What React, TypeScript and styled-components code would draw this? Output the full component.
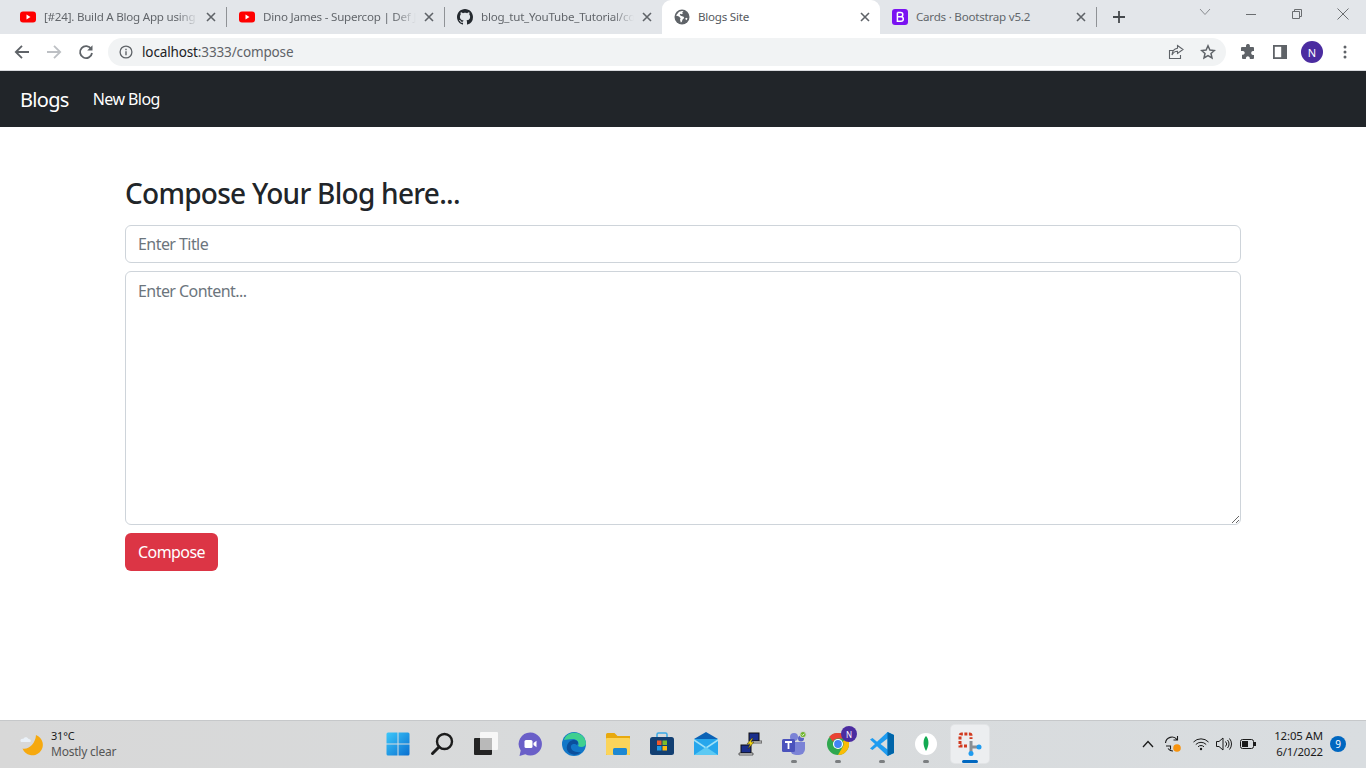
import React from "react";
import styled, { createGlobalStyle } from "styled-components";

const uiFont = `"Noto Sans", "Open Sans", "Liberation Sans", sans-serif`;

const GlobalStyle = createGlobalStyle`
  html, body { margin: 0; padding: 0; background: #fff; }
  body { font-family: ${uiFont}; overflow: hidden; }
  * { box-sizing: border-box; }
`;

const Screen = styled.div`
  display: flex;
  flex-direction: column;
  width: 1366px;
  height: 768px;
  overflow: hidden;
`;

/* browser chrome */
const TabStrip = styled.div`
  display: flex;
  align-items: stretch;
  height: 34px;
  background: #e3e6ea;
  padding-left: 8px;
  flex: none;
`;

const Tab = styled.div<{ $active?: boolean; $width: number }>`
  display: flex;
  align-items: center;
  width: ${(p) => p.$width}px;
  padding: 0 10px 0 12px;
  gap: 8px;
  background: ${(p) => (p.$active ? "#fff" : "transparent")};
  border-radius: 9px 9px 0 0;
  color: ${(p) => (p.$active ? "#55595e" : "#62666b")};
  flex: none;
`;

const TabTitle = styled.span<{ $fade?: boolean }>`
  flex: 1;
  min-width: 0;
  padding-bottom: 2px;
  font-size: 11.6px;
  letter-spacing: -0.02em;
  white-space: nowrap;
  overflow: hidden;
  ${(p) =>
    p.$fade &&
    `-webkit-mask-image: linear-gradient(90deg, #000 86%, transparent 100%);
     mask-image: linear-gradient(90deg, #000 86%, transparent 100%);`}
`;

const Divider = styled.div`
  width: 1px;
  height: 20px;
  align-self: center;
  background: #8f9296;
  flex: none;
`;

const PlusSlot = styled.div`
  display: flex;
  align-items: center;
  margin-left: 16px;
  flex: none;
`;

const WindowControls = styled.div`
  display: flex;
  align-items: flex-start;
  margin-left: auto;
  padding: 8px 17px 0 0;
  gap: 34px;
  flex: none;
`;

const Toolbar = styled.div`
  display: flex;
  align-items: center;
  height: 37px;
  padding-left: 14px;
  background: #fff;
  border-bottom: 1px solid #d8dadd;
  flex: none;
`;

const NavIcons = styled.div`
  display: flex;
  align-items: center;
  gap: 16px;
  margin-right: 14px;
`;

const AddressBar = styled.div`
  display: flex;
  align-items: center;
  width: 1118px;
  height: 28px;
  padding: 0 10px 0 11px;
  border-radius: 14px;
  background: #f1f3f4;
  gap: 9px;
  flex: none;
`;

const Url = styled.span`
  flex: 1;
  padding-bottom: 1px;
  font-size: 13.5px;
  letter-spacing: -0.01em;
  color: #5f6368;
  b { font-weight: 400; color: #202124; }
`;

const AddressActions = styled.div`
  display: flex;
  align-items: center;
  gap: 16px;
`;

const ToolActions = styled.div`
  display: grid;
  grid-template-columns: 32px 32px 32px 34px;
  justify-items: center;
  align-items: center;
  margin-left: 6px;
`;

const Avatar = styled.div`
  display: flex;
  align-items: center;
  justify-content: center;
  width: 22px;
  height: 22px;
  border-radius: 50%;
  background: #4b2ca0;
  color: #fff;
  font-size: 11px;
`;

/* page */
const NavBar = styled.nav`
  display: flex;
  align-items: center;
  height: 56px;
  padding: 0 20px;
  background: #212529;
  color: #fff;
  flex: none;
`;

const Brand = styled.a`
  font-size: 20px;
  letter-spacing: -0.035em;
  margin-right: 24px;
`;

const NavLink = styled.a`
  font-size: 16px;
  letter-spacing: -0.035em;
`;

const Main = styled.main`
  flex: 1;
  width: 1140px;
  margin: 0 auto;
  padding: 47px 12px 0;
`;

const Heading = styled.h3`
  margin: 0 0 13px;
  font-size: 28px;
  font-weight: 500;
  line-height: 38px;
  letter-spacing: -0.026em;
  color: #212529;
`;

const TitleInput = styled.input`
  display: block;
  width: 100%;
  height: 38px;
  padding: 6px 12px;
  margin-bottom: 8px;
  border: 1px solid #ced4da;
  border-radius: 6px;
  background: #fff;
  font-family: inherit;
  font-size: 16px;
  line-height: 24px;
  letter-spacing: -0.035em;
  &::placeholder { color: #6c757d; opacity: 1; }
`;

const ContentArea = styled.textarea`
  display: block;
  width: 100%;
  height: 254px;
  padding: 7px 12px 6px;
  margin-bottom: 8px;
  border: 1px solid #ced4da;
  border-radius: 6px;
  background: #fff;
  font-family: inherit;
  font-size: 16px;
  line-height: 24px;
  letter-spacing: -0.035em;
  &::placeholder { color: #6c757d; opacity: 1; }
`;

const ComposeButton = styled.button`
  display: block;
  height: 38px;
  width: 93px;
  padding: 0;
  border: 0;
  border-radius: 6px;
  background: #dc3545;
  color: #fff;
  font-family: inherit;
  font-size: 16px;
  letter-spacing: -0.035em;
`;

/* windows taskbar */
const TaskBar = styled.div`
  display: flex;
  align-items: center;
  height: 48px;
  padding-bottom: 1px;
  background: linear-gradient(90deg, #d8d8d8 0%, #d8dadb 40%, #d9dde0 100%);
  border-top: 1px solid #c6c8ca;
  flex: none;
`;

const Weather = styled.div`
  display: flex;
  align-items: center;
  gap: 6px;
  width: 383px;
  padding-left: 20px;
  flex: none;
`;

const WeatherText = styled.div`
  font-size: 11px;
  line-height: 16px;
  letter-spacing: -0.02em;
  color: #1b1b1b;
  span { display: block; color: #555; font-size: 12px; }
`;

const AppRow = styled.div`
  display: flex;
  align-items: center;
  gap: 14px;
  flex: none;
`;

const AppSlot = styled.div<{ $active?: boolean }>`
  position: relative;
  display: flex;
  align-items: center;
  justify-content: center;
  width: 30px;
  height: 38px;
  border-radius: 4px;
  ${(p) =>
    p.$active &&
    `background: #eceef0;
     box-shadow: 0 0 0 1px #e2e4e6;
     width: 38px;
     margin: 0 -4px;`}
`;

const RunDot = styled.i<{ $active?: boolean }>`
  position: absolute;
  bottom: 0;
  left: 50%;
  width: ${(p) => (p.$active ? 16 : 6)}px;
  height: 3px;
  margin-left: ${(p) => (p.$active ? -8 : -3)}px;
  border-radius: 2px;
  background: ${(p) => (p.$active ? "#0067c0" : "#7b7e80")};
`;

const Tray = styled.div`
  display: flex;
  align-items: center;
  margin-left: auto;
  padding-right: 20px;
  gap: 10px;
  flex: none;
`;

const TrayIcons = styled.div`
  display: grid;
  grid-template-columns: 24px 26px 30px 16px 32px;
  justify-items: center;
  align-items: center;
`;

const Clock = styled.div`
  width: 49px;
  text-align: right;
  font-size: 11.4px;
  line-height: 16px;
  letter-spacing: -0.01em;
  white-space: nowrap;
  color: #1b1b1b;
`;

const Badge = styled.div`
  display: flex;
  align-items: center;
  justify-content: center;
  width: 16px;
  height: 16px;
  margin-left: -3px;
  border-radius: 50%;
  background: #0067c0;
  color: #fff;
  font-size: 10px;
`;

const Stack = styled.span`
  position: relative;
  display: flex;
`;

const ProfileBadge = styled.span`
  position: absolute;
  top: -7px;
  right: -8px;
  display: flex;
  align-items: center;
  justify-content: center;
  width: 16px;
  height: 16px;
  border-radius: 50%;
  background: #4b2ca0;
  color: #fff;
  font-size: 8px;
`;

/* icons */
const Close = () => (
  <svg width="10" height="10" viewBox="0 0 10 10" style={{ flex: "none" }}>
    <path d="M1 1l8 8M9 1l-8 8" stroke="#5f6368" strokeWidth="1.6" />
  </svg>
);

const YouTube = () => (
  <svg width="16" height="16" viewBox="0 0 16 16" style={{ flex: "none" }}>
    <rect y="2.5" width="16" height="11" rx="3" fill="#f00" />
    <path d="M6.5 5.6v4.8L10.5 8z" fill="#fff" />
  </svg>
);

const GitHub = () => (
  <svg width="16" height="16" viewBox="0 0 16 16" style={{ flex: "none" }}>
    <path
      fill="#24292f"
      d="M8 0C3.58 0 0 3.58 0 8c0 3.54 2.29 6.53 5.47 7.59.4.07.55-.17.55-.38 0-.19-.01-.82-.01-1.49-2.01.37-2.53-.49-2.69-.94-.09-.23-.48-.94-.82-1.13-.28-.15-.68-.52-.01-.53.63-.01 1.08.58 1.23.82.72 1.21 1.87.87 2.33.66.07-.52.28-.87.51-1.07-1.78-.2-3.64-.89-3.64-3.95 0-.87.31-1.59.82-2.15-.08-.2-.36-1.02.08-2.12 0 0 .67-.21 2.2.82.64-.18 1.32-.27 2-.27s1.36.09 2 .27c1.53-1.04 2.2-.82 2.2-.82.44 1.1.16 1.92.08 2.12.51.56.82 1.27.82 2.15 0 3.07-1.87 3.75-3.65 3.95.29.25.54.73.54 1.48 0 1.07-.01 1.93-.01 2.2 0 .21.15.46.55.38A8.01 8.01 0 0 0 16 8c0-4.42-3.58-8-8-8z"
    />
  </svg>
);

const Globe = () => (
  <svg width="16" height="16" viewBox="0 0 16 16" style={{ flex: "none" }}>
    <circle cx="8" cy="8" r="7.5" fill="#5f6368" />
    <path
      fill="#fff"
      d="M2 6.5l3 1 1.6 1.8-.6 1.5.8 2.6.9-.4.9-2.6 1.6-1.5-.6-1.2-3-1-.9-1.4 1.2-.5.6.5 1.2-.4-.4-1.6 1.3-.9-1.5-.5-3 .8zM11 9.8l1.5 1.5 1-2-1-.6z"
    />
  </svg>
);

const BootstrapIcon = () => (
  <svg width="16" height="16" viewBox="0 0 16 16" style={{ flex: "none" }}>
    <rect width="16" height="16" rx="3" fill="#7b12f2" />
    <path
      fill="none"
      stroke="#fff"
      strokeWidth="1.5"
      d="M5.4 3.5h3.3c1.4 0 2.1.8 2.1 2s-.8 2.3-2.2 2.3H5.4m0 0h3.6c1.5 0 2.3.9 2.3 2.2s-.9 2.3-2.4 2.3H5.4z M5.4 3.5v4.3"
    />
  </svg>
);

const Plus = () => (
  <svg width="12" height="12" viewBox="0 0 12 12">
    <path d="M6 0v12M0 6h12" stroke="#45494d" strokeWidth="1.8" />
  </svg>
);

const WinChevron = () => (
  <svg width="12" height="8" viewBox="0 0 12 8">
    <path d="M1 1l5 5.5L11 1" fill="none" stroke="#8a8d91" />
  </svg>
);

const WinMin = () => (
  <svg width="12" height="12" viewBox="0 0 12 12">
    <path d="M1 6.5h10" stroke="#6a6d70" />
  </svg>
);

const WinRestore = () => (
  <svg width="12" height="12" viewBox="0 0 12 12">
    <path d="M1.5 3.5h7v7h-7zM3.5 3.5v-2h7v7h-2" fill="none" stroke="#6a6d70" />
  </svg>
);

const WinClose = () => (
  <svg width="12" height="12" viewBox="0 0 12 12">
    <path d="M.5.5l11 11M11.5.5l-11 11" stroke="#6a6d70" />
  </svg>
);

const Back = () => (
  <svg width="16" height="16" viewBox="0 0 16 16">
    <path d="M15 8H2M8 1.8L1.8 8 8 14.2" fill="none" stroke="#5f6368" strokeWidth="1.8" />
  </svg>
);

const Forward = () => (
  <svg width="16" height="16" viewBox="0 0 16 16">
    <path d="M1 8h13M8 1.8L14.2 8 8 14.2" fill="none" stroke="#bdc0c4" strokeWidth="1.8" />
  </svg>
);

const Reload = () => (
  <svg width="16" height="16" viewBox="0 0 16 16">
    <path d="M13.2 5A6 6 0 1 0 14 9" fill="none" stroke="#5f6368" strokeWidth="1.8" />
    <path d="M14.5 1.2v5.3H9.2z" fill="#5f6368" />
  </svg>
);

const Info = () => (
  <svg width="14" height="14" viewBox="0 0 14 14" style={{ flex: "none" }}>
    <circle cx="7" cy="7" r="5.9" fill="none" stroke="#5f6368" strokeWidth="1.3" />
    <path d="M7 6.2v4M7 3.8v1.4" stroke="#5f6368" strokeWidth="1.4" />
  </svg>
);

const Share = () => (
  <svg width="16" height="16" viewBox="0 0 16 16">
    <path d="M5 6.5H1.5v8h11V11" fill="none" stroke="#5f6368" strokeWidth="1.1" />
    <path
      d="M9.5 1.5l5.5 4-5.500 4V7.300C7 7.300 5.200 8.500 4 11c.2-3.700 2.400-6.200 5.500-6.700z"
      fill="none"
      stroke="#5f6368"
      strokeWidth="1.1"
    />
  </svg>
);

const Star = () => (
  <svg width="16" height="16" viewBox="0 0 16 16">
    <path
      d="M8 1.8l1.9 4.2 4.5.5-3.400 3 1 4.500L8 11.700 4 14l1-4.500-3.400-3 4.500-.5z"
      fill="none"
      stroke="#5f6368"
      strokeWidth="1.5"
    />
  </svg>
);

const Puzzle = () => (
  <svg width="16" height="16" viewBox="0 0 16 16">
    <path
      fill="#5f6368"
      d="M6 1.500a2 2 0 0 1 3.900 0V3H13a1 1 0 0 1 1 1v3h-1.300a2 2 0 0 0 0 3.900H14V14a1 1 0 0 1-1 1H9.800v-1.300a2 2 0 0 0-3.900 0V15H3a1 1 0 0 1-1-1v-3.200h1.200a2 2 0 0 0 0-3.900H1V4a1 1 0 0 1 1-1h4z"
    />
  </svg>
);

const SidePanel = () => (
  <svg width="14" height="14" viewBox="0 0 14 14">
    <rect width="14" height="14" fill="#5f6368" />
    <rect x="1.8" y="1.800" width="6.400" height="10.400" fill="#fff" />
  </svg>
);

const Kebab = () => (
  <svg width="12" height="14" viewBox="0 0 12 14">
    <circle cx="6" cy="2" r="1.5" fill="#5f6368" />
    <circle cx="6" cy="7" r="1.5" fill="#5f6368" />
    <circle cx="6" cy="12" r="1.5" fill="#5f6368" />
  </svg>
);

const MoonCloud = () => (
  <svg width="25" height="25" viewBox="0 0 25 25" style={{ flex: "none" }}>
    <path d="M16 3a10.500 10.500 0 1 1-13.500 13.500C8 18 15.500 12 16 3z" fill="#f6a90f" />
    <path d="M1 10c-1.500-2 .4-3.800 2.200-3 .9-2.400 4.300-2.400 5.300 0 1.800-.2 3 1.600 1.800 3z" fill="#eaf1f8" />
  </svg>
);

const WindowsLogo = () => (
  <svg width="24" height="24" viewBox="0 0 24 24">
    <defs>
      <linearGradient id="win" x1="0" y1="0" x2="1" y2="1">
        <stop offset="0" stopColor="#3cc8fa" />
        <stop offset="1" stopColor="#0a6fd0" />
      </linearGradient>
    </defs>
    <rect x=".5" y=".5" width="23" height="23" rx="1.5" fill="url(#win)" />
    <path d="M12 0v24M0 12h24" stroke="#d9dcdd" strokeWidth="1" />
  </svg>
);

const SearchIcon = () => (
  <svg width="24" height="24" viewBox="0 0 24 24">
    <circle cx="14.5" cy="9.500" r="7.500" fill="none" stroke="#1c1c1c" strokeWidth="2.400" />
    <path d="M9 15l-6.500 6.500" stroke="#1c1c1c" strokeWidth="3" strokeLinecap="round" />
  </svg>
);

const TaskView = () => (
  <svg width="24" height="24" viewBox="0 0 24 24">
    <rect x="6" y="0" width="18" height="18" rx="1" fill="#f7f7f7" />
    <rect x="0" y="6" width="18" height="17" rx="1" fill="#242424" />
    <rect x="6" y="6" width="12" height="12" fill="#b9b9b9" />
  </svg>
);

const ChatIcon = () => (
  <svg width="24" height="24" viewBox="0 0 24 24">
    <path d="M12.500.5a11.500 11.500 0 1 1-5.200 21.800L1.500 24l1.200-5.500A11.500 11.500 0 0 1 12.500.5z" fill="#6a5fc8" />
    <rect x="6.500" y="8" width="8" height="8" rx="1.500" fill="#fff" />
    <path d="M15.500 11l3-2.200v6.400l-3-2.200z" fill="#fff" />
  </svg>
);

const EdgeIcon = () => (
  <svg width="24" height="24" viewBox="0 0 24 24">
    <circle cx="12" cy="12" r="12" fill="#1277c8" />
    <path d="M2 8C5-2 22-2 24 11c0 4-5 5-8 3 2-3-1-7-5-7-4 0-7 1-9 1z" fill="#3fd08f" />
    <path d="M12 8c4 0 5 3 3 5-1-1-5-2-6 1-1 4 4 7 10 6-6 6-16 1-14-6 1-4 4-6 7-6z" fill="#0b4f9c" />
  </svg>
);

const FolderIcon = () => (
  <svg width="24" height="24" viewBox="0 0 24 24">
    <path d="M0 2.500A1.500 1.500 0 0 1 1.500 1h7l3 3H24v19H0z" fill="#e8a90e" />
    <rect x="0" y="6" width="24" height="17" rx="1" fill="#fbd45a" />
    <rect x="7" y="16" width="14" height="7" rx="1.500" fill="#1e88d2" />
  </svg>
);

const StoreIcon = () => (
  <svg width="24" height="24" viewBox="0 0 24 24">
    <path d="M7 5V2.500A1.500 1.500 0 0 1 8.500 1h7A1.500 1.500 0 0 1 17 2.500V5" fill="none" stroke="#3aa9e6" strokeWidth="1.5" />
    <rect y="5" width="24" height="18" rx="2.500" fill="#123f72" />
    <rect x="7" y="8.500" width="4.500" height="4.500" fill="#f05a2a" />
    <rect x="12.500" y="8.500" width="4.500" height="4.500" fill="#7cbb2a" />
    <rect x="7" y="14" width="4.500" height="4.500" fill="#1d9ae8" />
    <rect x="12.500" y="14" width="4.500" height="4.500" fill="#fdbb10" />
  </svg>
);

const MailIcon = () => (
  <svg width="24" height="24" viewBox="0 0 24 24">
    <path d="M12 0l12 7H0z" fill="#0b62b5" />
    <rect y="7" width="24" height="16" fill="#26a6ec" />
    <path d="M0 7l12 8 12-8v2l-12 8L0 9z" fill="#9fe0f7" />
    <path d="M0 23l12-8 12 8z" fill="#5cc9f3" />
  </svg>
);

const NetworkIcon = () => (
  <svg width="24" height="24" viewBox="0 0 24 24">
    <rect x="11" y="1" width="10" height="8" fill="#1b2f8c" stroke="#111" />
    <rect x="3" y="13" width="10" height="8" fill="#1b2f8c" stroke="#111" />
    <path d="M1 21h14v2H1zM13 9h11v2H13z" fill="#ddd" stroke="#111" strokeWidth=".6" />
    <path d="M14 6l-5 6h3l-2 5 6-7h-3l2-4z" fill="#f5d60f" stroke="#222" strokeWidth=".5" />
  </svg>
);

const TeamsIcon = () => (
  <svg width="26" height="26" viewBox="0 0 26 26">
    <circle cx="13" cy="6" r="4" fill="#7b83d6" />
    <circle cx="20" cy="7.500" r="3" fill="#5a62c4" />
    <path d="M9 11h15v7a6 6 0 0 1-6 6h-3a6 6 0 0 1-6-6z" fill="#7b83d6" />
    <rect x="1" y="8" width="13" height="13" rx="1.500" fill="#4b53bc" />
    <path d="M4 11h7M7.500 11v7" stroke="#fff" strokeWidth="1.8" />
    <circle cx="22" cy="3.500" r="3.500" fill="#cfd2cf" />
    <circle cx="22" cy="3.500" r="2.500" fill="#6fb52c" />
    <path d="M20.700 3.500l1 1 1.700-1.800" stroke="#fff" fill="none" strokeWidth=".9" />
  </svg>
);

const ChromeIcon = () => (
  <svg width="22" height="22" viewBox="0 0 48 48">
    <circle cx="24" cy="24" r="24" fill="#2fa84f" />
    <path d="M24 0a24 24 0 0 1 20.800 12H24a12 12 0 0 0-11 7L5 8A24 24 0 0 1 24 0z" fill="#ea4335" />
    <path d="M44.800 12A24 24 0 0 1 24 48l10.400-18A12 12 0 0 0 34.400 18z" fill="#fbbc05" />
    <circle cx="24" cy="24" r="11" fill="#fff" />
    <circle cx="24" cy="24" r="8.500" fill="#4285f4" />
  </svg>
);

const VsCode = () => (
  <svg width="24" height="24" viewBox="0 0 24 24">
    <path d="M17.500 0L24 3v18l-6.500 3L7 14.300 2.500 18 0 16.500 5 12 0 7.500 2.500 6 7 9.700z" fill="#1f9cf0" />
    <path d="M17.500 6.500L10.500 12l7 5.500z" fill="#d9dcdd" />
    <path d="M17.500 0L24 3v18l-6.500 3z" fill="#0065a9" />
  </svg>
);

const MongoIcon = () => (
  <svg width="24" height="24" viewBox="0 0 24 24">
    <circle cx="12" cy="12" r="11" fill="#fff" />
    <path d="M12 4c3 3 3.500 9 0 15-3.500-6-3-12 0-15z" fill="#13aa52" />
  </svg>
);

const SnipIcon = () => (
  <svg width="24" height="24" viewBox="0 0 24 24">
    <path
      d="M9 14H2V3.500A1.500 1.500 0 0 1 3.500 2h8A1.500 1.500 0 0 1 13 3.500V7"
      fill="none"
      stroke="#d13b20"
      strokeWidth="3"
      strokeDasharray="3 1.500"
    />
    <path d="M13 9v12M13 15h8" stroke="#8a8f94" strokeWidth="3" />
    <circle cx="21" cy="15" r="2.500" fill="#1f9cf0" />
    <circle cx="13" cy="21.500" r="2.500" fill="#1f9cf0" />
  </svg>
);

const ChevronUp = () => (
  <svg width="12" height="8" viewBox="0 0 12 8">
    <path d="M1 7l5-5.500L11 7" fill="none" stroke="#1b1b1b" strokeWidth="1.3" />
  </svg>
);

const SyncIcon = () => (
  <svg width="18" height="18" viewBox="0 0 18 18">
    <path
      d="M1.500 8A6.500 6.500 0 0 1 13 4.500M13.500 1v4h-4M2 11h4.500v3.500M4 13.500a6 6 0 0 0 5 2.500"
      fill="none"
      stroke="#1b1b1b"
      strokeWidth="1.1"
    />
    <circle cx="13" cy="13" r="3.800" fill="#f7930e" />
  </svg>
);

const WifiIcon = () => (
  <svg width="16" height="14" viewBox="0 0 16 14">
    <g fill="none" stroke="#1b1b1b" strokeWidth="1">
      <path d="M.5 5a10.500 10.500 0 0 1 15 0" />
      <path d="M2.800 7.500a7.300 7.300 0 0 1 10.400 0" />
      <path d="M5 9.800a4.200 4.200 0 0 1 6 0" />
    </g>
    <circle cx="8" cy="12" r="1.200" fill="#1b1b1b" />
  </svg>
);

const SpeakerIcon = () => (
  <svg width="17" height="14" viewBox="0 0 17 14">
    <g fill="none" stroke="#1b1b1b" strokeWidth="1">
      <path d="M.5 4.500h2.500L7 1v12L3 9.500H.5z" />
      <path d="M9.500 4.500a3.500 3.500 0 0 1 0 5M11.500 3a6 6 0 0 1 0 8M13.500 1.500a8.500 8.500 0 0 1 0 11" />
    </g>
  </svg>
);

const BatteryIcon = () => (
  <svg width="16" height="10" viewBox="0 0 16 10">
    <rect x=".5" y=".5" width="13" height="9" rx="2" fill="none" stroke="#1b1b1b" />
    <rect x="2" y="2" width="6" height="6" fill="#1b1b1b" />
    <rect x="14" y="3" width="2" height="4" fill="#1b1b1b" />
  </svg>
);

const tabs = [
  { id: 1, icon: <YouTube />, title: "[#24]. Build A Blog App using React", w: 218 },
  { id: 2, icon: <YouTube />, title: "Dino James - Supercop | Def Jam India", w: 217 },
  { id: 3, icon: <GitHub />, title: "blog_tut_YouTube_Tutorial/compose", w: 217 },
];

const apps = [
  { id: "start", icon: <WindowsLogo /> },
  { id: "search", icon: <SearchIcon /> },
  { id: "tasks", icon: <TaskView /> },
  { id: "chat", icon: <ChatIcon /> },
  { id: "edge", icon: <EdgeIcon /> },
  { id: "files", icon: <FolderIcon /> },
  { id: "store", icon: <StoreIcon /> },
  { id: "mail", icon: <MailIcon /> },
  { id: "net", icon: <NetworkIcon /> },
  { id: "teams", icon: <TeamsIcon />, running: true },
  {
    id: "chrome",
    running: true,
    icon: (
      <Stack>
        <ChromeIcon />
        <ProfileBadge>N</ProfileBadge>
      </Stack>
    ),
  },
  { id: "code", icon: <VsCode />, running: true },
  { id: "mongo", icon: <MongoIcon />, running: true },
  { id: "snip", icon: <SnipIcon />, active: true },
];

export default function App() {
  return (
    <Screen>
      <GlobalStyle />
      <TabStrip>
        {tabs.map((t) => (
          <React.Fragment key={t.id}>
            <Tab $width={t.w}>
              {t.icon}
              <TabTitle $fade>{t.title}</TabTitle>
              <Close />
            </Tab>
            {t.id < 3 && <Divider />}
          </React.Fragment>
        ))}
        <Tab $active $width={218}>
          <Globe />
          <TabTitle>Blogs Site</TabTitle>
          <Close />
        </Tab>
        <Tab $width={216}>
          <BootstrapIcon />
          <TabTitle>Cards · Bootstrap v5.2</TabTitle>
          <Close />
        </Tab>
        <Divider />
        <PlusSlot>
          <Plus />
        </PlusSlot>
        <WindowControls>
          <WinChevron />
          <WinMin />
          <WinRestore />
          <WinClose />
        </WindowControls>
      </TabStrip>

      <Toolbar>
        <NavIcons>
          <Back />
          <Forward />
          <Reload />
        </NavIcons>
        <AddressBar>
          <Info />
          <Url>
            <b>localhost</b>:3333/compose
          </Url>
          <AddressActions>
            <Share />
            <Star />
          </AddressActions>
        </AddressBar>
        <ToolActions>
          <Puzzle />
          <SidePanel />
          <Avatar>N</Avatar>
          <Kebab />
        </ToolActions>
      </Toolbar>

      <NavBar>
        <Brand>Blogs</Brand>
        <NavLink>New Blog</NavLink>
      </NavBar>

      <Main>
        <Heading>Compose Your Blog here...</Heading>
        <TitleInput placeholder="Enter Title" />
        <ContentArea placeholder="Enter Content..." />
        <ComposeButton>Compose</ComposeButton>
      </Main>

      <TaskBar>
        <Weather>
          <MoonCloud />
          <WeatherText>
            31°C
            <span>Mostly clear</span>
          </WeatherText>
        </Weather>
        <AppRow>
          {apps.map((a) => (
            <AppSlot key={a.id} $active={a.active}>
              {a.icon}
              {a.running && <RunDot />}
              {a.active && <RunDot $active />}
            </AppSlot>
          ))}
        </AppRow>
        <Tray>
          <TrayIcons>
            <ChevronUp />
            <SyncIcon />
            <WifiIcon />
            <SpeakerIcon />
            <BatteryIcon />
          </TrayIcons>
          <Clock>
            12:05 AM
            <br />
            6/1/2022
          </Clock>
          <Badge>9</Badge>
        </Tray>
      </TaskBar>
    </Screen>
  );
}
